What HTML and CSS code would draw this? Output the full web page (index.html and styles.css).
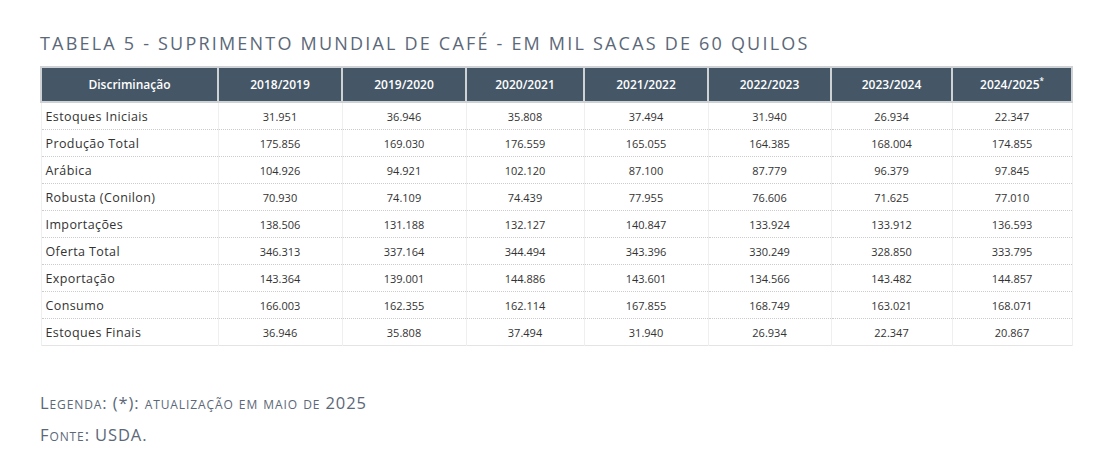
FILE: index.html
```html
<!DOCTYPE html>
<html lang="pt">
<head>
<meta charset="utf-8">
<link rel="stylesheet" href="styles.css">
</head>
<body>
<div class="page">
  <h1 class="title">TABELA 5 - SUPRIMENTO MUNDIAL DE CAFÉ - EM MIL SACAS DE 60 QUILOS</h1>
  <table class="tbl">
    <colgroup>
      <col class="c0"><col class="c1"><col class="c2"><col class="c3"><col class="c4"><col class="c5"><col class="c6"><col class="c7">
    </colgroup>
    <thead>
      <tr>
        <th>Discriminação</th><th>2018/2019</th><th>2019/2020</th><th>2020/2021</th><th>2021/2022</th><th>2022/2023</th><th>2023/2024</th><th>2024/2025<sup>*</sup></th>
      </tr>
    </thead>
    <tbody>
      <tr><td>Estoques Iniciais</td><td>31.951</td><td>36.946</td><td>35.808</td><td>37.494</td><td>31.940</td><td>26.934</td><td>22.347</td></tr>
      <tr><td>Produção Total</td><td>175.856</td><td>169.030</td><td>176.559</td><td>165.055</td><td>164.385</td><td>168.004</td><td>174.855</td></tr>
      <tr><td>Arábica</td><td>104.926</td><td>94.921</td><td>102.120</td><td>87.100</td><td>87.779</td><td>96.379</td><td>97.845</td></tr>
      <tr><td>Robusta (Conilon)</td><td>70.930</td><td>74.109</td><td>74.439</td><td>77.955</td><td>76.606</td><td>71.625</td><td>77.010</td></tr>
      <tr><td>Importações</td><td>138.506</td><td>131.188</td><td>132.127</td><td>140.847</td><td>133.924</td><td>133.912</td><td>136.593</td></tr>
      <tr><td>Oferta Total</td><td>346.313</td><td>337.164</td><td>344.494</td><td>343.396</td><td>330.249</td><td>328.850</td><td>333.795</td></tr>
      <tr><td>Exportação</td><td>143.364</td><td>139.001</td><td>144.886</td><td>143.601</td><td>134.566</td><td>143.482</td><td>144.857</td></tr>
      <tr><td>Consumo</td><td>166.003</td><td>162.355</td><td>162.114</td><td>167.855</td><td>168.749</td><td>163.021</td><td>168.071</td></tr>
      <tr><td>Estoques Finais</td><td>36.946</td><td>35.808</td><td>37.494</td><td>31.940</td><td>26.934</td><td>22.347</td><td>20.867</td></tr>
    </tbody>
  </table>
  <p class="note legend">Legenda: (*): atualização em maio de 2025</p>
  <p class="note source">Fonte: USDA.</p>
</div>
</body>
</html>
```
FILE: styles.css
```css
html, body {
  margin: 0;
  padding: 0;
  background: #ffffff;
}
.page {
  padding: 31px 0 0 40px;
  font-family: "Open Sans", "Noto Sans", sans-serif;
}
.title {
  margin: 0 0 11px 0;
  font-family: "Open Sans", sans-serif;
  font-weight: 400;
  font-size: 18px;
  line-height: 24px;
  letter-spacing: 2.2px;
  color: #5b6878;
}
.tbl {
  border-collapse: collapse;
  table-layout: fixed;
  width: 1031px;
  border: 1px solid #e4e4e4;
}
.c0 { width: 177px; }
.c1 { width: 124px; }
.c2 { width: 124px; }
.c3 { width: 118px; }
.c4 { width: 124px; }
.c5 { width: 123px; }
.c6 { width: 121px; }
.c7 { width: 120px; }
.tbl th {
  background: #455767;
  color: #ffffff;
  font-family: "Open Sans", sans-serif;
  font-weight: 600;
  font-size: 12px;
  height: 33px;
  padding: 0;
  border: 2px solid #cfd2d4;
  text-align: center;
}
.tbl th sup {
  font-size: 8px;
  vertical-align: 5px;
  line-height: 0;
}
.tbl td {
  height: 26px;
  padding: 0;
  font-family: "Open Sans", sans-serif;
  font-size: 11px;
  color: #333333;
  text-align: center;
  border-left: 1px solid #efefef;
  border-right: 1px solid #efefef;
  border-bottom: 1px dotted #cccccc;
}
.tbl td:first-child {
  text-align: left;
  padding-left: 4px;
  font-size: 12.5px;
  letter-spacing: 0.4px;
  color: #333333;
}
.note {
  margin: 0;
  font-family: "Open Sans", sans-serif;
  font-variant: small-caps;
  font-size: 16.5px;
  letter-spacing: 0.9px;
  color: #5b6878;
}
.legend {
  margin-top: 45px;
  line-height: 24px;
}
.source {
  margin-top: 8px;
  line-height: 24px;
}
```
